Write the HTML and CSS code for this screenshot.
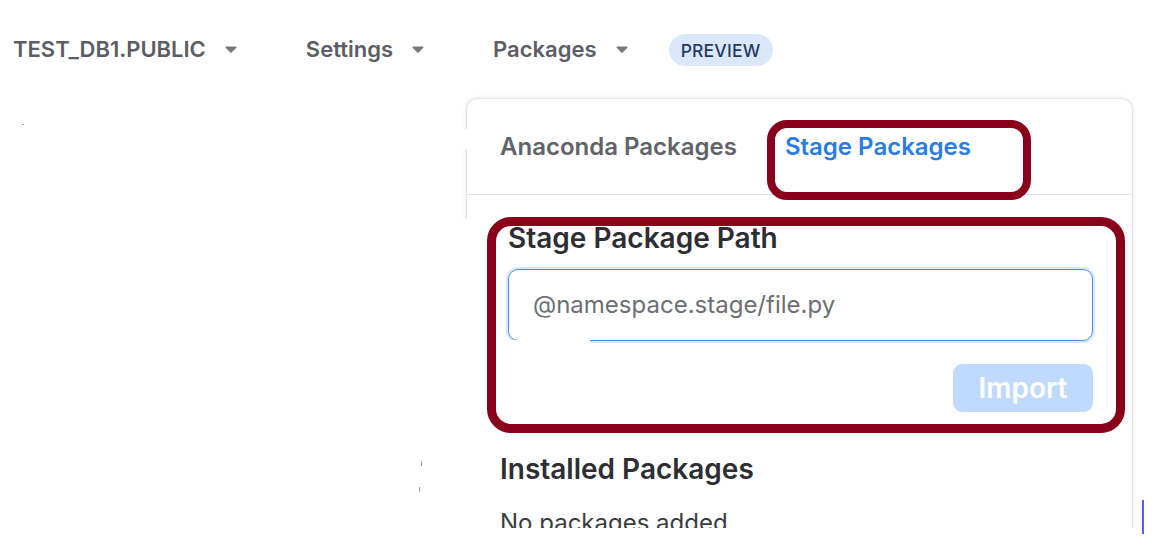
FILE: index.html
```html
<!DOCTYPE html>
<html lang="en">
<head>
<meta charset="utf-8">
<title>Packages</title>
<link rel="stylesheet" href="styles.css">
</head>
<body>
  <nav class="nav">
    <div class="nav-item">
      <span class="nav-label">TEST_DB1.PUBLIC</span>
      <svg class="caret" viewBox="0 0 12 7" width="12" height="7"><path d="M1.2 0.5h9.6a0.8 0.8 0 0 1 0.6 1.3L6.6 6.4a0.8 0.8 0 0 1-1.2 0L0.6 1.8A0.8 0.8 0 0 1 1.2 0.5z" fill="#77797e"/></svg>
    </div>
    <div class="nav-item">
      <span class="nav-label">Settings</span>
      <svg class="caret" viewBox="0 0 12 7" width="12" height="7"><path d="M1.2 0.5h9.6a0.8 0.8 0 0 1 0.6 1.3L6.6 6.4a0.8 0.8 0 0 1-1.2 0L0.6 1.8A0.8 0.8 0 0 1 1.2 0.5z" fill="#77797e"/></svg>
    </div>
    <div class="nav-item nav-item-last">
      <span class="nav-label">Packages</span>
      <svg class="caret" viewBox="0 0 12 7" width="12" height="7"><path d="M1.2 0.5h9.6a0.8 0.8 0 0 1 0.6 1.3L6.6 6.4a0.8 0.8 0 0 1-1.2 0L0.6 1.8A0.8 0.8 0 0 1 1.2 0.5z" fill="#77797e"/></svg>
    </div>
    <span class="pill">PREVIEW</span>
  </nav>

  <section class="panel">
    <div class="tabs">
      <span class="tab">Anaconda Packages</span>
      <span class="tab tab-active">Stage Packages</span>
    </div>
    <div class="stage">
      <h2 class="stage-title">Stage Package Path</h2>
      <div class="input"><span class="placeholder">@namespace.stage/file.py</span></div>
      <div class="actions"><button class="btn">Import</button></div>
    </div>
    <div class="installed">
      <h2 class="installed-title">Installed Packages</h2>
      <p class="empty">No packages added</p>
    </div>
  </section>

  <div class="mark mark-box1"></div>
  <div class="mark mark-box2"></div>

  <div class="patch patch-gap"></div>
  <div class="patch patch-left"></div>
  <div class="patch patch-input"></div>
  <div class="patch patch-bottom"></div>
  <div class="cursor-line"></div>
  <div class="speck speck-a"></div>
  <div class="speck speck-b"></div>
  <div class="speck speck-c"></div>
</body>
</html>
```

FILE: styles.css
```css
* { box-sizing: border-box; }
html, body { margin: 0; padding: 0; }
body {
  width: 1156px;
  height: 546px;
  overflow: hidden;
  background: #ffffff;
  font-family: Inter, "Noto Sans", "Liberation Sans", sans-serif;
  position: relative;
}

.nav {
  height: 98px;
  display: flex;
  align-items: center;
  padding-left: 13px;
}
.nav-item {
  display: flex;
  align-items: center;
  gap: 19px;
  margin-right: 69px;
}
.nav-item-last { margin-right: 41px; }
.nav-label {
  font-size: 22px;
  font-weight: 600;
  color: #5b5e64;
  line-height: 26px;
}
.caret { display: block; margin-top: 1px; }
.pill {
  display: inline-flex;
  align-items: center;
  justify-content: center;
  width: 104px;
  height: 32px;
  margin-top: 2px;
  border-radius: 16px;
  background: #dbe8fc;
  color: #1f3a66;
  font-size: 17.5px;
  font-weight: 500;
  letter-spacing: 0.2px;
}

.panel {
  margin-left: 466px;
  width: 667px;
  height: 470px;
  border: 1px solid #e4e4e4;
  border-bottom: none;
  border-radius: 12px 12px 0 0;
  box-shadow: 0 0 4px rgba(0, 0, 0, 0.10);
  background: #fff;
}
.tabs {
  height: 96px;
  border-bottom: 1px solid #e3e3e3;
  display: flex;
  gap: 48px;
  padding: 34px 0 0 33px;
}
.tab {
  font-size: 24px;
  font-weight: 600;
  line-height: 28px;
  color: #606368;
}
.tab-active { color: #2a7be6; }

.stage { padding: 27px 39px 0 41px; }
.stage-title {
  margin: 0;
  font-size: 28px;
  font-weight: 600;
  line-height: 32px;
  color: #2c2e33;
}
.input {
  margin-top: 15px;
  height: 72px;
  border: 1.5px solid #4a8cf2;
  border-radius: 10px;
  box-shadow: 0 0 0 2px #dbe8fd;
  display: flex;
  align-items: center;
  padding-left: 24px;
}
.placeholder {
  font-size: 24px;
  color: #6c6f74;
  line-height: 28px;
}
.actions {
  display: flex;
  justify-content: flex-end;
  margin-top: 23px;
}
.btn {
  width: 140px;
  height: 48px;
  border: none;
  border-radius: 9px;
  background: #bfdafd;
  color: #ffffff;
  font-family: inherit;
  font-size: 28px;
  font-weight: 600;
  padding: 0;
}

.installed { padding: 40px 0 0 33px; }
.installed-title {
  margin: 0;
  font-size: 28px;
  font-weight: 600;
  line-height: 34px;
  color: #2c2e33;
}
.empty {
  margin: 22px 0 0;
  font-size: 24px;
  line-height: 30px;
  color: #3a3c40;
}

.mark {
  position: absolute;
  border: 8px solid #88001a;
}
.mark-box1 { left: 767px; top: 120px; width: 264px; height: 80px; border-radius: 20px; }
.mark-box2 { left: 487px; top: 217px; width: 638px; height: 216px; border-width: 9px; border-radius: 24px; }

.patch { position: absolute; background: #fff; }
.patch-gap { left: 458px; top: 129px; width: 10px; height: 20px; }
.patch-left { left: 456px; top: 219px; width: 11px; height: 330px; }
.patch-input { left: 498px; top: 340px; width: 92px; height: 8px; }
.patch-bottom { left: 400px; top: 528px; width: 738px; height: 18px; }

.cursor-line {
  position: absolute;
  left: 1142px;
  top: 500px;
  width: 2px;
  height: 34px;
  background: #5a5aff;
}
.speck { position: absolute; background: #9aa0a6; }
.speck-a { left: 22px; top: 124px; width: 2px; height: 1px; background: #7cc3c4; }
.speck-b { left: 421px; top: 461px; width: 1px; height: 5px; }
.speck-c { left: 419px; top: 487px; width: 1px; height: 5px; }
```
